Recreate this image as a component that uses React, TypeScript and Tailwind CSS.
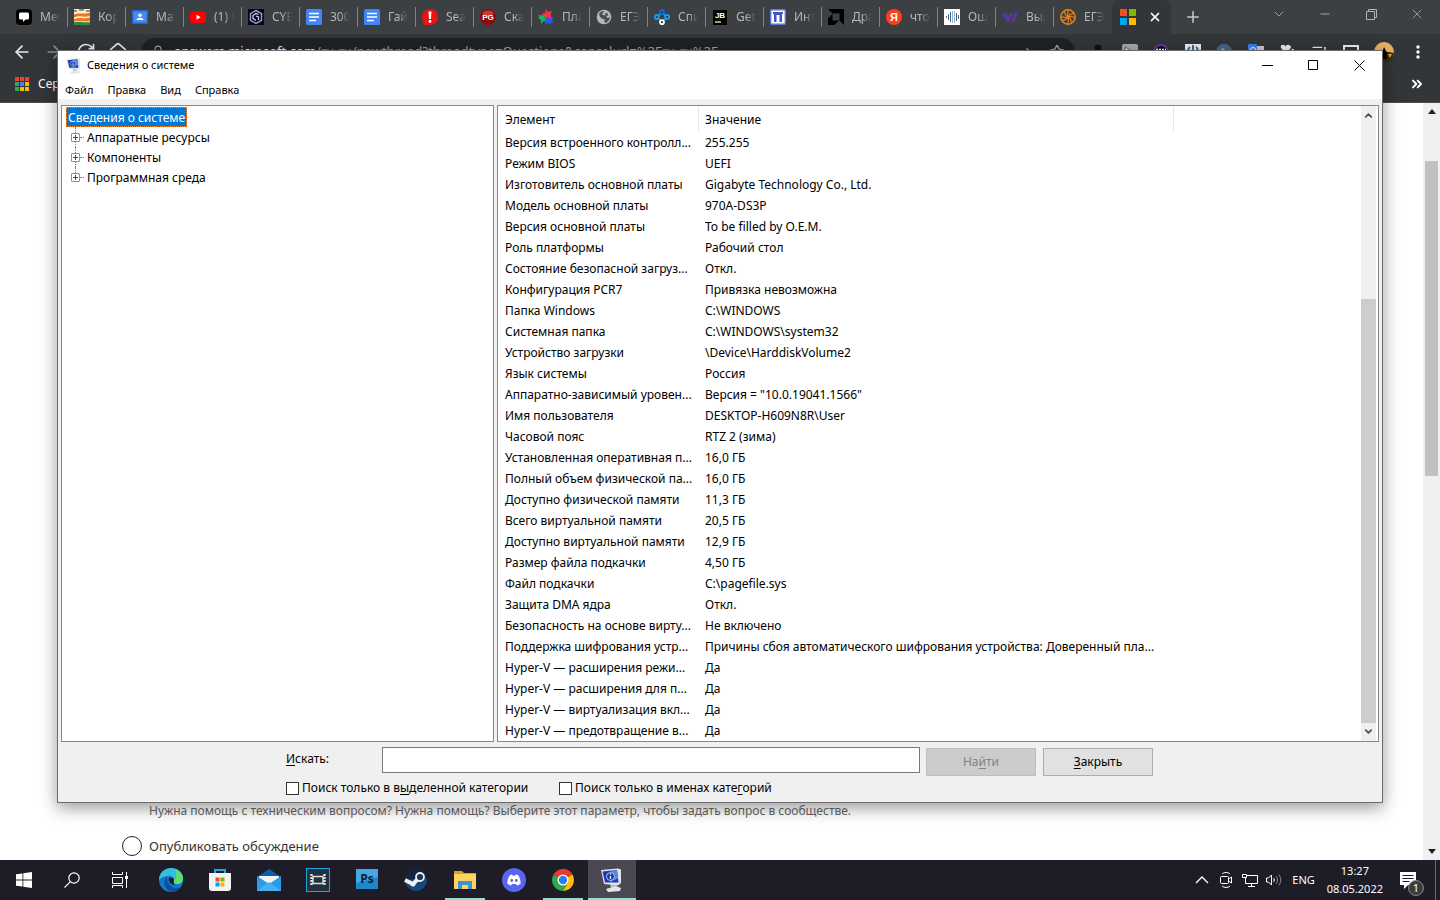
import React from 'react';
import {
  ArrowLeft,
  ArrowRight,
  ChevronDown,
  ChevronsRight,
  ChevronUp,
  Forward,
  House,
  ListMusic,
  Lock,
  Minus,
  Plus,
  Puzzle,
  RotateCw,
  Star,
  X,
} from 'lucide-react';

const tabs = [
  { title: 'Месс', icon: <ChatIcon /> },
  { title: 'Корз', icon: <StripesIcon /> },
  { title: 'Мате', icon: <ClassroomIcon /> },
  { title: '(1) Н', icon: <YoutubeIcon /> },
  { title: 'CYBE', icon: <CyberIcon /> },
  { title: '3000', icon: <DocsIcon /> },
  { title: 'Гайд', icon: <DocsIcon /> },
  { title: 'Sear', icon: <AlertIcon /> },
  { title: 'Скач', icon: <PgIcon /> },
  { title: 'План', icon: <StarsIcon /> },
  { title: 'ЕГЭ', icon: <GlobeIcon /> },
  { title: 'Спис', icon: <NodesIcon /> },
  { title: 'Get I', icon: <JetBrainsIcon /> },
  { title: 'Инте', icon: <GateIcon /> },
  { title: 'Драй', icon: <AmdIcon /> },
  { title: 'что', icon: <YandexIcon /> },
  { title: 'Оши', icon: <WaveIcon /> },
  { title: 'Выл', icon: <SlashesIcon /> },
  { title: 'ЕГЭ', icon: <WheelIcon /> },
];

const treeItems = ['Аппаратные ресурсы', 'Компоненты', 'Программная среда'];

const rows = [
  ['Версия встроенного контролл...', '255.255'],
  ['Режим BIOS', 'UEFI'],
  ['Изготовитель основной платы', 'Gigabyte Technology Co., Ltd.'],
  ['Модель основной платы', '970A-DS3P'],
  ['Версия основной платы', 'To be filled by O.E.M.'],
  ['Роль платформы', 'Рабочий стол'],
  ['Состояние безопасной загруз...', 'Откл.'],
  ['Конфигурация PCR7', 'Привязка невозможна'],
  ['Папка Windows', 'C:\\WINDOWS'],
  ['Системная папка', 'C:\\WINDOWS\\system32'],
  ['Устройство загрузки', '\\Device\\HarddiskVolume2'],
  ['Язык системы', 'Россия'],
  ['Аппаратно-зависимый уровен...', 'Версия = "10.0.19041.1566"'],
  ['Имя пользователя', 'DESKTOP-H609N8R\\User'],
  ['Часовой пояс', 'RTZ 2 (зима)'],
  ['Установленная оперативная п...', '16,0 ГБ'],
  ['Полный объем физической па...', '16,0 ГБ'],
  ['Доступно физической памяти', '11,3 ГБ'],
  ['Всего виртуальной памяти', '20,5 ГБ'],
  ['Доступно виртуальной памяти', '12,9 ГБ'],
  ['Размер файла подкачки', '4,50 ГБ'],
  ['Файл подкачки', 'C:\\pagefile.sys'],
  ['Защита DMA ядра', 'Откл.'],
  ['Безопасность на основе вирту...', 'Не включено'],
  ['Поддержка шифрования устр...', 'Причины сбоя автоматического шифрования устройства: Доверенный пла...'],
  ['Hyper-V — расширения режи...', 'Да'],
  ['Hyper-V — расширения для п...', 'Да'],
  ['Hyper-V — виртуализация вкл...', 'Да'],
  ['Hyper-V — предотвращение в...', 'Да'],
];

function ChatIcon() {
  return (
    <svg viewBox="0 0 16 16" className="h-4 w-4">
      <rect width="16" height="16" rx="4" fill="#000" />
      <path d="M4.500 3.500h7A1.500 1.500 0 0 1 13 5v4a1.500 1.500 0 0 1-1.500 1.500H9.500L7 13v-2.500H4.500A1.500 1.500 0 0 1 3 9V5a1.500 1.500 0 0 1 1.500-1.500z" fill="#fff" />
    </svg>
  );
}

function StripesIcon() {
  return (
    <svg viewBox="0 0 16 16" className="h-4 w-4">
      <rect width="16" height="16" fill="#f4efe4" />
      <path d="M0 1h3v2H0zM5 0h5v2H5zM12 1h4v2h-4z" fill="#8a9b5d" />
      <path d="M0 5.500c5-2.500 10 .5 16-2v3.500C10 9 6 5.500 0 8.500z" fill="#f07818" />
      <path d="M0 10.500c5-3 9 0 16-2v3.500c-6 1.500-11-1-16 .5z" fill="#f07818" />
      <path d="M0 13c6-1 10 1 16 0v3H0z" fill="#2e8b45" />
    </svg>
  );
}

function ClassroomIcon() {
  return (
    <svg viewBox="0 0 16 16" className="h-4 w-4">
      <rect y="1" width="16" height="14" rx="1" fill="#2a66c8" />
      <rect x="1.500" y="2.500" width="13" height="11" fill="#4a8af4" />
      <circle cx="8" cy="6.200" r="1.700" fill="#fff" />
      <path d="M4.500 11c0-3 7-3 7 0z" fill="#fff" />
    </svg>
  );
}

function YoutubeIcon() {
  return (
    <svg viewBox="0 0 16 16" className="h-4 w-4">
      <rect y="2.500" width="16" height="11.500" rx="3" fill="#f00" />
      <path d="M6.500 5.800v5l4.200-2.500z" fill="#fff" />
    </svg>
  );
}

function CyberIcon() {
  return (
    <svg viewBox="0 0 16 16" className="h-4 w-4">
      <rect width="16" height="16" fill="#050510" />
      <path d="M8 1.500l5.500 3.200v6.600L8 14.500l-5.500-3.200V4.700z" fill="none" stroke="#8fa2e8" strokeWidth="1.500" />
      <path d="M10.500 5.500L8 4.500 5 6.500v3l3 2M8 7l2.500 1v3" fill="none" stroke="#d5dcf5" strokeWidth="1.200" />
    </svg>
  );
}

function DocsIcon() {
  return (
    <svg viewBox="0 0 16 16" className="h-4 w-4">
      <rect width="16" height="16" rx="1.500" fill="#4285f4" />
      <path d="M3 4.500h10M3 8h10M3 11.500h7" stroke="#fff" strokeWidth="1.700" />
    </svg>
  );
}

function AlertIcon() {
  return (
    <svg viewBox="0 0 16 16" className="h-4 w-4">
      <path d="M8 0a8 8 0 0 1 0 16H1.500L0 8a8 8 0 0 1 8-8z" fill="#e11" />
      <path d="M6.500 2.500h3L9 10H7z" fill="#fff" />
      <circle cx="8" cy="12.500" r="1.400" fill="#fff" />
    </svg>
  );
}

function PgIcon() {
  return (
    <svg viewBox="0 0 16 16" className="h-4 w-4">
      <circle cx="8" cy="8" r="8" fill="#8e0a0a" />
      <ellipse cx="8" cy="4.500" rx="5.500" ry="3" fill="#c83a32" />
      <text x="8" y="11" textAnchor="middle" fontSize="8" fontWeight="bold" fontFamily="Liberation Sans, sans-serif" fill="#fff">PG</text>
    </svg>
  );
}

function StarsIcon() {
  return (
    <svg viewBox="0 0 16 16" className="h-4 w-4">
      <path d="M8 0l2 3 4-1-1.500 4L14 9l-4 0-3 2-1-4-3-2 4-1z" fill="#f5333f" />
      <path d="M0 6l4 .5L7 6l-.5 3L8 12l-3 .5L3 15v-4L0 9l1.500-1z" fill="#12b76a" />
      <path d="M9 8l3 1 3-1-1 3 2 2-3 .5L12 16l-2-2-3 1 1-4z" fill="#2f5bea" />
    </svg>
  );
}

function GlobeIcon() {
  return (
    <svg viewBox="0 0 16 16" className="h-4 w-4">
      <circle cx="8" cy="8" r="7.300" fill="#b4b6b9" />
      <path d="M3 5c1-2 3-3 5-3 0 2-2 2-2 4 2 0 5 0 5 3 1 0 2-1 3 0-1 3-3 4.500-5 5-1-1 0-3-1-4-2 0-4-1-5-5z" fill="#4a4d50" />
      <circle cx="10.500" cy="5.500" r="1.500" fill="#4a4d50" />
    </svg>
  );
}

function NodesIcon() {
  return (
    <svg viewBox="0 0 16 16" className="h-4 w-4" fill="none" strokeWidth="1.800">
      <path d="M3 8l5-4.500L13 8M3 8l5 5 5-5" stroke="#1597db" />
      <circle cx="8" cy="3" r="2" fill="#1e3850" stroke="#1668d8" />
      <circle cx="2.800" cy="8" r="2" fill="#1e3850" stroke="#19a0e8" />
      <circle cx="13.200" cy="8" r="2" fill="#1e3850" stroke="#19a0e8" />
      <circle cx="8" cy="13.200" r="2" fill="#1e3850" stroke="#fff" />
    </svg>
  );
}

function JetBrainsIcon() {
  return (
    <svg viewBox="0 0 16 16" className="h-4 w-4">
      <rect x="1" y="1" width="14" height="15" fill="#000" />
      <text x="8" y="9" textAnchor="middle" fontSize="8" fontWeight="bold" fontFamily="Liberation Sans, sans-serif" fill="#fff">JB</text>
      <path d="M3 13h6" stroke="#fff" strokeWidth="1.200" />
    </svg>
  );
}

function GateIcon() {
  return (
    <svg viewBox="0 0 16 16" className="h-4 w-4">
      <rect x=".7" y=".7" width="14.600" height="14.600" rx="1" fill="#fff" stroke="#5b78d8" strokeWidth="1.400" />
      <path d="M3 3h10v2h-1v8H9.500V6h-3v7H4V5H3z" fill="#3c57c4" />
    </svg>
  );
}

function AmdIcon() {
  return (
    <svg viewBox="0 0 16 16" className="h-4 w-4">
      <path d="M0 0h16v16l-4.500-4.500v-7h-7zM4.500 5v6.500H11L6.500 16H0V9.500z" fill="#000" />
    </svg>
  );
}

function YandexIcon() {
  return (
    <svg viewBox="0 0 16 16" className="h-4 w-4">
      <circle cx="8" cy="8" r="8" fill="#fc3f1d" />
      <text x="8" y="12" textAnchor="middle" fontSize="11" fontWeight="bold" fontFamily="Liberation Sans, sans-serif" fill="#fff">Я</text>
    </svg>
  );
}

function WaveIcon() {
  return (
    <svg viewBox="0 0 16 16" className="h-4 w-4">
      <rect width="16" height="16" fill="#fff" />
      <path d="M2.500 7v2M4.500 5v6M6.500 3v10M12.500 4v8M14.500 6v4" stroke="#50627c" />
      <path d="M8 2h1v12H8zM10 2h1v12h-1z" fill="#8fb4d4" />
    </svg>
  );
}

function SlashesIcon() {
  return (
    <svg viewBox="0 0 16 16" className="h-4 w-4">
      <path d="M0 4h4l2 4 2-4h3l-4 9H5zM13 3h3l-4 10H9z" fill="#5b35a5" />
    </svg>
  );
}

function WheelIcon() {
  return (
    <svg viewBox="0 0 16 16" className="h-4 w-4" fill="none" stroke="#f08010">
      <circle cx="8" cy="8" r="7.200" strokeWidth="1.500" />
      <path d="M8 8C6 5 9 4 8 1M8 8c1-4 4-2 6-4M8 8c3-2 4 1 7 0M8 8c4 1 2 4 4 6M8 8c2 3-1 4 0 7M8 8c-1 4-4 2-6 4M8 8c-3 2-4-1-7 0M8 8C4 7 6 4 4 2" strokeWidth="1.100" />
    </svg>
  );
}

function MicrosoftIcon() {
  return (
    <svg viewBox="0 0 16 16" className="h-4 w-4">
      <path d="M0 0h7v7H0z" fill="#f25022" />
      <path d="M9 0h7v7H9z" fill="#7fba00" />
      <path d="M0 9h7v7H0z" fill="#00a4ef" />
      <path d="M9 9h7v7H9z" fill="#ffb900" />
    </svg>
  );
}

function ComputerIcon({ className }: { className: string }) {
  return (
    <svg viewBox="0 0 24 24" className={className}>
      <path d="M10 16h6l1 4-6 1z" fill="#b4b8be" />
      <path d="M6 21l10-3 5 2-1 3-12 1z" fill="#e4e6e9" />
      <path d="M1 2l17-1.500 3 1V15l-3 2.500L4 16z" fill="#dfe3ea" />
      <path d="M2.500 3.500L17 2l1.500 12.500L5 14.500z" fill="#2338b4" />
      <path d="M11 3l6-.8 1 8-8 4.300z" fill="#5c86e0" />
      <circle cx="10.500" cy="8.500" r="4" fill="#1c3aa8" stroke="#a9c4ff" />
      <path d="M10.500 8v3M10.500 5.500v1.200" stroke="#fff" strokeWidth="1.300" />
    </svg>
  );
}

function BrowserTabs() {
  return (
    <div className="flex h-[34px] bg-[#3c4043] pl-[10px]">
      {tabs.map((tab, i) => (
        <button key={i} className="flex w-[58px] shrink-0 items-center pl-[6px] text-left">
          <span className="shrink-0">{tab.icon}</span>
          <span className="ml-2 w-[20px] overflow-hidden whitespace-nowrap text-[12px] text-[#b4b8bc] [mask-image:linear-gradient(to_right,#000_50%,transparent)]">
            {tab.title}
          </span>
          {i < tabs.length - 1 && <span className="ml-[7px] h-5 w-px bg-[#7d8185]" />}
        </button>
      ))}
      <div className="flex w-[59px] shrink-0 items-center justify-between rounded-t-lg bg-[#323639] pl-2 pr-[9px]">
        <MicrosoftIcon />
        <button aria-label="Закрыть вкладку">
          <X className="h-[14px] w-[14px] text-white" strokeWidth={3} />
        </button>
      </div>
      <button aria-label="Новая вкладка" className="ml-[13px]">
        <Plus className="h-[18px] w-[18px] text-[#c8cacc]" />
      </button>
      <div className="ml-auto flex items-center pb-[6px] text-[#b0b3b6]">
        <button aria-label="Поиск вкладок" className="flex w-[46px] justify-center">
          <ChevronDown className="h-4 w-4" strokeWidth={1.200} />
        </button>
        <button aria-label="Свернуть браузер" className="flex w-[46px] justify-center">
          <Minus className="h-[14px] w-[14px]" strokeWidth={1.500} />
        </button>
        <button aria-label="Восстановить" className="flex w-[46px] justify-center">
          <svg viewBox="0 0 11 11" className="h-[11px] w-[11px]" fill="none" stroke="currentColor">
            <path d="M.5 2.500h8v8h-8zM2.500 2.500v-2h8v8h-2" />
          </svg>
        </button>
        <button aria-label="Закрыть браузер" className="flex w-[46px] justify-center">
          <X className="h-4 w-4" strokeWidth={1.200} />
        </button>
      </div>
    </div>
  );
}

function BrowserToolbar() {
  return (
    <div className="flex h-[36px] items-center bg-[#323639] text-[#e8eaed]">
      <div className="flex w-[141px] shrink-0 justify-between pl-3 pr-[13px]">
        <button aria-label="Назад"><ArrowLeft className="h-5 w-5" /></button>
        <button aria-label="Вперёд"><ArrowRight className="h-5 w-5 text-[#8a8d91]" /></button>
        <button aria-label="Обновить"><RotateCw className="h-5 w-5" /></button>
        <button aria-label="Главная"><House className="h-5 w-5" /></button>
      </div>
      <div className="flex h-7 flex-1 items-center rounded-full bg-[#202124] pl-[10px] pr-[10px] text-[13px] text-[#9aa0a6]">
        <Lock className="h-[14px] w-[14px]" />
        <span className="ml-[9px] flex-1 whitespace-nowrap">
          <span className="text-[#e8eaed]">answers.microsoft.com</span>
          /ru-ru/newthread?threadtype=Questions&amp;cancelurl=%2Fru-ru%2F
        </span>
        <Forward className="h-4 w-4" />
        <Star className="ml-4 h-4 w-4" />
      </div>
      <div className="flex w-[365px] shrink-0 items-center justify-between pl-[15px] pr-[14px]">
        <svg viewBox="0 0 16 16" className="h-4 w-4">
          <circle cx="8" cy="4" r="3.500" fill="#111" />
          <path d="M2 15c0-8 12-8 12 0z" fill="#111" />
        </svg>
        <svg viewBox="0 0 16 16" className="h-4 w-4">
          <rect width="16" height="16" rx="2" fill="#a5a8aa" />
          <path d="M3 3l11 6-11 5z" fill="#d8dadc" stroke="#666" />
        </svg>
        <svg viewBox="0 0 16 16" className="h-4 w-4">
          <circle cx="8" cy="8" r="7" fill="#15101f" stroke="#7a35c8" strokeWidth="1.500" />
          <path d="M3 6h10" stroke="#fff" strokeWidth="2.500" strokeDasharray="2 1" />
        </svg>
        <svg viewBox="0 0 16 16" className="h-4 w-4">
          <rect width="16" height="16" fill="#e8eaed" />
          <path d="M8 1v7M5 3a5 5 0 1 0 6 0" fill="none" stroke="#2d6ea8" strokeWidth="2" />
        </svg>
        <svg viewBox="0 0 16 16" className="h-4 w-4">
          <circle cx="8" cy="8" r="8" fill="#44688a" />
          <path d="M6 4l6 4-6 4z" fill="#a8c4dc" />
        </svg>
        <svg viewBox="0 0 16 16" className="h-4 w-4">
          <rect x="5" y="2" width="11" height="13" fill="#c4c8cc" />
          <rect width="9" height="13" rx="1" fill="#3b7ded" />
          <circle cx="5" cy="6" r="2.500" fill="none" stroke="#fff" />
        </svg>
        <Puzzle className="h-4 w-4 -rotate-90" fill="currentColor" />
        <ListMusic className="h-4 w-4" />
        <svg viewBox="0 0 16 16" className="h-4 w-4">
          <path d="M1 2h14v12H1z" fill="none" stroke="#e8eaed" strokeWidth="2" />
          <path d="M9 6h6v8H9z" fill="#e8eaed" />
        </svg>
        <svg viewBox="0 0 20 20" className="h-5 w-5">
          <circle cx="10" cy="10" r="10" fill="#e4b25f" />
          <path d="M0 11c6-2 13-2 20 0a10 10 0 0 1-20 0z" fill="#3b2a14" />
          <path d="M10 5l3 6v6H8v-6z" fill="#000" />
          <path d="M3 13l5 1-3 3zM14 12l4 0-2 4z" fill="#e8a020" />
        </svg>
        <svg viewBox="0 0 16 16" className="h-4 w-4" fill="#fff">
          <circle cx="8" cy="3" r="1.700" />
          <circle cx="8" cy="8" r="1.700" />
          <circle cx="8" cy="13" r="1.700" />
        </svg>
      </div>
    </div>
  );
}

function BookmarksBar() {
  const colors = ['#ea4335', '#ea4335', '#ea4335', '#34a853', '#4285f4', '#fbbc05', '#34a853', '#fbbc05', '#fbbc05'];
  return (
    <div className="flex h-[33px] items-center justify-between border-b border-[#4b4e51] bg-[#323639] pl-[15px] pr-[15px] pb-1">
      <div className="flex items-center text-[12px] text-white">
        <svg viewBox="0 0 14 14" className="mr-[9px] h-[14px] w-[14px]">
          {colors.map((color, i) => (
            <rect key={i} x={(i % 3) * 5} y={Math.floor(i / 3) * 5} width="4" height="4" fill={color} />
          ))}
        </svg>
        Сервисы
      </div>
      <ChevronsRight className="h-4 w-4 text-white" strokeWidth={3} />
    </div>
  );
}

function ForumPage() {
  return (
    <div className="flex min-h-0 flex-1 bg-white">
      <div className="flex flex-1 flex-col justify-end px-[122px] pb-1 text-[13px] text-[#333]">
        <p className="pl-[27px] text-[12px] leading-5 text-[#666]">
          Нужна помощь с техническим вопросом? Нужна помощь? Выберите этот параметр, чтобы задать вопрос в сообществе.
        </p>
        <label className="mt-[15px] flex items-center leading-5">
          <input type="radio" name="kind" className="mr-[7px] h-5 w-5 appearance-none rounded-full border border-[#222] bg-white" />
          Опубликовать обсуждение
        </label>
      </div>
      <div className="flex w-[17px] flex-col items-center bg-[#f0f0f0] py-[6px]">
        <svg viewBox="0 0 8 5" className="h-[5px] w-2"><path d="M4 0l4 5H0z" fill="#222" /></svg>
        <div className="mt-[47px] h-[315px] w-[13px] bg-[#c1c1c1]" />
        <svg viewBox="0 0 8 5" className="mt-auto h-[5px] w-2"><path d="M4 5L0 0h8z" fill="#222" /></svg>
      </div>
    </div>
  );
}

function TreePanel() {
  return (
    <div className="w-[433px] shrink-0 border border-[#828790] bg-white py-px pl-1 text-[12px]">
      <button className="block h-5 border border-dotted border-[#ff8728] bg-[#0078d7] px-px pt-[2px] leading-4 text-white">
        Сведения о системе
      </button>
      <ul>
        {treeItems.map((item) => (
          <li key={item} className="flex h-5 items-center pl-[5px]">
            <span className="flex h-5 w-[9px] flex-col items-center">
              <span className="flex-1 border-l border-dotted border-[#808080]" />
              <svg viewBox="0 0 9 9" className="h-[9px] w-[9px] shrink-0">
                <rect x="0.500" y="0.500" width="8" height="8" rx="0.500" fill="#fff" stroke="#919191" />
                <path d="M2 4.500h5M4.500 2v5" stroke="#2b4a8f" />
              </svg>
              <span
                className={`flex-1 border-l border-dotted ${
                  item === 'Программная среда' ? 'border-transparent' : 'border-[#808080]'
                }`}
              />
            </span>
            <span className="mr-[3px] w-1 border-t border-dotted border-[#808080]" />
            <span className="pt-[2px] leading-[18px]">{item}</span>
          </li>
        ))}
      </ul>
    </div>
  );
}

function DetailsPanel() {
  return (
    <div className="flex min-w-0 flex-1 border border-[#828790] bg-white pr-[2px]">
      <div className="min-w-0 flex-1 overflow-hidden">
        <table className="w-[676px] table-fixed border-separate border-spacing-0 text-left text-[12px] whitespace-nowrap">
          <thead>
            <tr className="h-[25px]">
              <th className="w-[201px] border-r border-[#e5e5e5] p-0 pt-[2px] pl-[7px] font-normal">Элемент</th>
              <th className="border-r border-[#e5e5e5] p-0 pt-[2px] pl-[6px] font-normal">Значение</th>
            </tr>
          </thead>
          <tbody>
            {rows.map(([name, value]) => (
              <tr key={name} className="h-[21px] leading-[18px]">
                <td className="p-0 pt-[2px] pl-[7px]">{name}</td>
                <td className="p-0 pt-[2px] pl-[6px]">{value}</td>
              </tr>
            ))}
          </tbody>
        </table>
      </div>
      <div className="flex w-[15px] flex-col items-center bg-[#f0f0f0] py-1">
        <ChevronUp className="h-[11px] w-[11px] text-[#505050]" strokeWidth={4} />
        <div className="mt-auto h-[424px] w-full bg-[#cdcdcd]" />
        <ChevronDown className="mt-[3px] h-[11px] w-[11px] text-[#505050]" strokeWidth={4} />
      </div>
    </div>
  );
}

function SearchPanel() {
  return (
    <form className="mx-auto w-full max-w-[868px] pt-[5px] pr-px pb-1 text-[12px]" onSubmit={(e) => e.preventDefault()}>
      <div className="flex">
        <label htmlFor="query" className="w-[96px] leading-6">
          <u className="underline-offset-2">И</u>скать:
        </label>
        <input id="query" type="text" className="h-[26px] min-w-0 flex-1 border border-[#7a7a7a] bg-white px-1 outline-none" />
        <button disabled className="mt-px ml-[6px] h-7 w-[110px] border border-[#bfbfbf] bg-[#cccccc] text-[#838383]">
          На<u className="underline-offset-2">й</u>ти
        </button>
        <button type="button" className="mt-px ml-[7px] h-7 w-[110px] border border-[#adadad] bg-[#e1e1e1]">
          <u className="underline-offset-2">З</u>акрыть
        </button>
      </div>
      <div className="mt-[2px] flex leading-5">
        <label className="flex w-[273px] items-center">
          <input type="checkbox" className="mr-[3px] h-[13px] w-[13px] appearance-none border border-[#333] bg-white" />
          <span>Поиск только в в<u className="underline-offset-2">ы</u>деленной категории</span>
        </label>
        <label className="flex items-center">
          <input type="checkbox" className="mr-[3px] h-[13px] w-[13px] appearance-none border border-[#333] bg-white" />
          <span>Поиск только в именах кате<u className="underline-offset-2">г</u>орий</span>
        </label>
      </div>
    </form>
  );
}

function SystemInfoWindow() {
  return (
    <div className="absolute inset-x-[57px] top-[50px] bottom-[97px] flex flex-col border border-[#6b6b6b] bg-[#f0f0f0] text-black shadow-[0_5px_16px_rgba(0,0,0,0.4)]">
      <div className="flex h-[29px] shrink-0 items-center bg-white pl-2 text-[11px]">
        <ComputerIcon className="mr-[5px] h-4 w-4" />
        Сведения о системе
        <div className="ml-auto flex">
          <button aria-label="Свернуть" className="flex w-[45px] justify-center">
            <svg viewBox="0 0 11 11" className="h-[11px] w-[11px]"><path d="M0 5.500h11" stroke="#000" /></svg>
          </button>
          <button aria-label="Развернуть" className="flex w-[46px] justify-center">
            <svg viewBox="0 0 11 11" className="h-[11px] w-[11px]"><path d="M.5.5h9v9h-9z" fill="none" stroke="#000" /></svg>
          </button>
          <button aria-label="Закрыть окно" className="flex w-[46px] justify-center">
            <svg viewBox="0 0 11 11" className="h-[11px] w-[11px]"><path d="M.5.5l10 10M10.500.5l-10 10" stroke="#000" /></svg>
          </button>
        </div>
      </div>
      <div className="mb-[6px] flex h-[19px] shrink-0 items-center gap-[14px] bg-white pt-[2px] pl-[7px] text-[11px]">
        <button>Файл</button>
        <button>Правка</button>
        <button>Вид</button>
        <button>Справка</button>
      </div>
      <div className="flex min-h-0 flex-1 gap-[3px] px-[3px]">
        <TreePanel />
        <DetailsPanel />
      </div>
      <SearchPanel />
    </div>
  );
}

const pinned = [
  {
    name: 'Edge',
    icon: (
      <svg viewBox="0 0 24 24" className="h-6 w-6">
        <circle cx="12" cy="12" r="12" fill="#1479c9" />
        <path d="M0 12A12 12 0 0 1 12 0c8 0 12 6 12 10 0 4-3 6-6 6-4 0-4-2-3-4 0-3-3-5-7-4-4 0-7 3-8 4z" fill="#35bfd8" />
        <path d="M16 1c5 2 8 6 8 10 0 3-3 5-6 5s-4-2-3-4c3 0 3-6 1-11z" fill="#5fdf6a" />
        <path d="M8 9c-5 4-3 13 5 15 4 0 7-2 9-5-6 3-14 0-14-10z" fill="#0c4f9e" />
        <path d="M10 10c1-1 5-1 5 2 0 2-1 3 1 5-4 0-7-3-6-7z" fill="#1c2233" />
      </svg>
    ),
  },
  {
    name: 'Store',
    icon: (
      <svg viewBox="0 0 24 24" className="h-6 w-6">
        <path d="M7 6V2h10v4" fill="none" stroke="#20a5dc" strokeWidth="2" />
        <path d="M1 5h22v15a3 3 0 0 1-3 3H4a3 3 0 0 1-3-3z" fill="#f3f3f3" />
        <path d="M7.500 9.500h4v4h-4z" fill="#f25022" />
        <path d="M12.500 9.500h4v4h-4z" fill="#7fba00" />
        <path d="M7.500 14.500h4v4h-4z" fill="#00a4ef" />
        <path d="M12.500 14.500h4v4h-4z" fill="#ffb900" />
      </svg>
    ),
  },
  {
    name: 'Mail',
    icon: (
      <svg viewBox="0 0 24 24" className="h-6 w-6">
        <path d="M0 9l12-8 12 8z" fill="#0f5ea8" />
        <path d="M2 8h20v10H2z" fill="#f3f3f3" />
        <path d="M0 8l12 8 12-8v15H0z" fill="#2c9be6" />
        <path d="M0 23l12-9 12 9z" fill="#45b3f2" />
      </svg>
    ),
  },
  {
    name: 'Movies',
    icon: (
      <svg viewBox="0 0 24 24" className="h-6 w-6">
        <rect x=".5" y=".5" width="23" height="23" fill="#20323f" stroke="#1ba4dc" />
        <path d="M5.500 6v12M18.500 6v12" stroke="#ddd" strokeWidth="2.500" strokeDasharray="2 1" />
        <path d="M7 8.500h10v7H7z" fill="#20323f" stroke="#ddd" strokeWidth="1.500" />
      </svg>
    ),
  },
  {
    name: 'Photoshop',
    icon: (
      <svg viewBox="0 0 24 24" className="h-6 w-6">
        <rect x="1" y="1" width="22" height="20" fill="#1d86cc" />
        <path d="M1 1h22v8L1 15z" fill="#43a8e6" />
        <text x="12" y="15" textAnchor="middle" fontSize="12" fontWeight="bold" fontFamily="Open Sans, sans-serif" fill="#0b2038">Ps</text>
      </svg>
    ),
  },
  {
    name: 'Steam',
    icon: (
      <svg viewBox="0 0 24 24" className="h-6 w-6">
        <circle cx="12" cy="12" r="11" fill="#16467a" />
        <path d="M1 12A11 11 0 0 1 23 10z" fill="#14233f" />
        <path d="M1 12l8 4 7-7" fill="none" stroke="#f0f0f0" strokeWidth="4" />
        <circle cx="16" cy="9" r="4" fill="#1b3454" stroke="#f0f0f0" strokeWidth="1.800" />
        <circle cx="9" cy="16" r="2.500" fill="#f0f0f0" />
      </svg>
    ),
  },
  {
    name: 'Explorer',
    running: true,
    icon: (
      <svg viewBox="0 0 24 24" className="h-6 w-6">
        <path d="M1 3h8l2 2h12v5H1z" fill="#e0a21b" />
        <path d="M1 6h22v15H1z" fill="#fbd560" />
        <path d="M5 13h14v8h-4v-4H9v4H5z" fill="#3d92d8" />
      </svg>
    ),
  },
  {
    name: 'Discord',
    icon: (
      <svg viewBox="0 0 24 24" className="h-6 w-6">
        <circle cx="12" cy="12" r="12" fill="#5865f2" />
        <path d="M8 7l2-.5.500 1h3l.5-1 2 .5c2 3 3 6 2.500 9L15 17.500l-1-1.500h-4l-1 1.500L5.500 16C5 13 6 10 8 7z" fill="#fff" />
        <circle cx="9.700" cy="12.500" r="1.400" fill="#5865f2" />
        <circle cx="14.300" cy="12.500" r="1.400" fill="#5865f2" />
      </svg>
    ),
  },
  {
    name: 'Chrome',
    running: true,
    icon: (
      <svg viewBox="0 0 24 24" className="h-6 w-6">
        <path d="M12 12L2.500 6.500A11 11 0 0 1 21.500 6.500z" fill="#e33b2e" />
        <path d="M12 12L2.500 6.500A11 11 0 0 0 12 23l4.800-8.200z" fill="#2da94f" />
        <path d="M12 12l9.500-5.500A11 11 0 0 1 12 23l4.800-8.200z" fill="#fdbd00" />
        <path d="M12 7h9.700l-.2-.5A11 11 0 0 0 12 1z" fill="#e33b2e" />
        <circle cx="12" cy="12" r="5.500" fill="#fff" />
        <circle cx="12" cy="12" r="4.200" fill="#2e7cf0" />
      </svg>
    ),
  },
];

function Taskbar() {
  return (
    <div className="flex h-10 shrink-0 bg-[#1e1c27] text-white">
      <button aria-label="Пуск" className="flex w-12 items-center justify-center">
        <svg viewBox="0 0 16 16" className="h-4 w-4" fill="#fff">
          <path d="M0 2.300l6.500-.9v6.200H0zM7.300 1.300L16 0v7.600H7.300zM0 8.400h6.500v6.200L0 13.700zM7.300 8.400H16V16l-8.700-1.300z" />
        </svg>
      </button>
      <button aria-label="Поиск" className="flex w-12 items-center justify-center">
        <svg viewBox="0 0 16 16" className="h-4 w-4" fill="none" stroke="#fff" strokeWidth="1.200">
          <circle cx="10" cy="6" r="5.200" />
          <path d="M6.200 9.800L.5 15.500" />
        </svg>
      </button>
      <button aria-label="Представление задач" className="flex w-12 items-center justify-center">
        <svg viewBox="0 0 16 16" className="h-4 w-4" fill="none" stroke="#fff">
          <path d="M.5 0v2.500h10V0M.5 5.500h10v6H.5zM.5 16v-2.500h10V16M14.500 0v16" />
          <path d="M13 4h3v3h-3z" fill="#fff" stroke="none" />
        </svg>
      </button>
      <div className="ml-[3px] flex gap-px">
        {pinned.map((app) => (
          <button
            key={app.name}
            aria-label={app.name}
            className="flex w-12 flex-col items-center justify-between pt-2"
          >
            {app.icon}
            {app.running && <span className="h-[2px] w-10 bg-[#8de0d0]" />}
          </button>
        ))}
        <button aria-label="Сведения о системе" className="flex w-12 flex-col items-center justify-between bg-[#4a4953] pt-2">
          <ComputerIcon className="h-6 w-6" />
          <span className="h-[2px] w-full bg-[#8de0d0]" />
        </button>
      </div>
      <div className="ml-auto flex items-center text-[11px]">
        <svg viewBox="0 0 14 14" className="mr-[9px] h-[14px] w-[14px]" fill="none" stroke="#fff" strokeWidth="1.300">
          <path d="M1 10l6-6 6 6" />
        </svg>
        <svg viewBox="0 0 16 16" className="mr-2 h-4 w-4" fill="none" stroke="#fff">
          <rect x="2.500" y="4.500" width="8" height="7" rx="1" />
          <path d="M10.500 7l3-2v6l-3-2M4 2c2-2 6-2 8 0M4 14c2 2 6 2 8 0" />
        </svg>
        <svg viewBox="0 0 16 16" className="mr-2 h-4 w-4" fill="none" stroke="#fff">
          <path d="M5 3.500h10.500v8H3.500V6M9.500 11.500v3M6 14.500h7" />
          <path d="M.5 2.500h4v3h-4z" />
        </svg>
        <svg viewBox="0 0 16 16" className="mr-[10px] h-4 w-4" fill="none" stroke="#fff">
          <path d="M.5 6h2l3-3v10l-3-3h-2zM7.500 6c1 1 1 3 0 4" />
          <path d="M10 4c2 2 2 6 0 8M12.500 2.500c3 3 3 8 0 11" stroke="#8b8a92" />
        </svg>
        <span className="mr-[12px]">ENG</span>
        <div className="mr-4 text-center leading-[18px]">
          <div>13:27</div>
          <div>08.05.2022</div>
        </div>
        <button aria-label="Уведомления" className="relative mr-3 h-6 w-6">
          <svg viewBox="0 0 24 24" className="h-6 w-6">
            <path d="M1 4h16v13H9l-4 4v-4H1z" fill="#fff" />
            <path d="M3.500 7.500h11M3.500 10.500h11M3.500 13.500h7" stroke="#1e1c27" />
          </svg>
          <span className="absolute -right-px -bottom-1 flex h-4 w-4 items-center justify-center rounded-full border border-[#8b8b8b] bg-[#3c3b42] text-[11px]">
            1
          </span>
        </button>
        <span className="mr-1 h-full w-px bg-[#6e6d76]" />
      </div>
    </div>
  );
}

export default function App() {
  return (
    <div className="relative flex h-screen flex-col overflow-hidden font-['Noto_Sans','Open_Sans',sans-serif]">
      <BrowserTabs />
      <BrowserToolbar />
      <BookmarksBar />
      <ForumPage />
      <SystemInfoWindow />
      <Taskbar />
    </div>
  );
}
